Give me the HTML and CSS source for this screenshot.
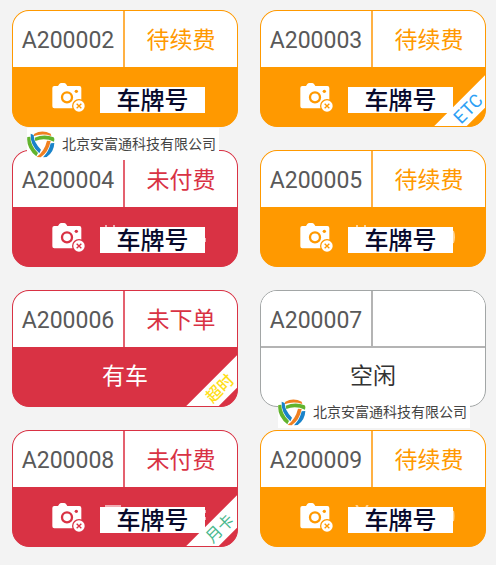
FILE: index.html
```html
<!DOCTYPE html>
<html lang="zh-CN">
<head>
<meta charset="utf-8">
<meta name="viewport" content="width=device-width, initial-scale=1">
<title>A200002 – A200009</title>
<link rel="stylesheet" href="styles.css">
</head>
<body>
<svg class="defs" aria-hidden="true">
  <symbol id="camera" viewBox="0 0 99 87">
    <path fill="currentColor" d="M7 9H18L22 3Q24 0 28 0H36Q40 0 42 3L46 9H82Q88 9 88 15V70Q88 76 82 76H7Q1 76 1 70V15Q1 9 7 9Z"/>
    <circle class="cut-line" cx="45" cy="43" r="15" stroke-width="7"/>
    <circle class="cut" cx="73" cy="25" r="5"/>
    <circle class="cut" cx="81" cy="69" r="21"/>
    <circle fill="currentColor" cx="81" cy="69" r="17"/>
    <path class="cut-line" stroke-width="4" d="M74 62L88 76M88 62L74 76"/>
  </symbol>
  <symbol id="logo" viewBox="0 0 84 81">
    <path fill="#f08020" d="M22 8Q46-5 71 8L73 15Q46 6 19 16Z"/>
    <path fill="#62b32e" d="M23 20Q52 8 80 19Q84 23 81 32Q52 19 25 30Z"/>
    <path fill="#1a83c9" d="M11 8L20 12Q20 34 42 56L37 67Q8 40 11 8Z"/>
    <path fill="#62b32e" d="M1 18L10 17Q10 43 33 66L28 76Q-3 51 1 18Z"/>
    <path fill="#f08020" d="M60 29L71 30Q65 63 41 79L29 78Q53 59 60 29Z"/>
    <path fill="#1a83c9" d="M82 36Q81 63 59 78L48 79Q66 61 71 37Z"/>
  </symbol>
</svg>
<main>
  <ul class="spaces">
    <li class="card due">
      <div class="face">
        <div class="head"><span class="number">A200002</span><span class="status">待续费</span></div>
        <div class="body vehicle">
          <svg class="camera" aria-hidden="true"><use href="#camera"/></svg>
          <span class="plate">车牌号</span>
        </div>
      </div>
    </li>
    <li class="card due">
      <div class="face">
        <div class="head"><span class="number">A200003</span><span class="status">待续费</span></div>
        <div class="body vehicle">
          <svg class="camera" aria-hidden="true"><use href="#camera"/></svg>
          <span class="plate">车牌号</span>
        </div>
        <span class="ribbon etc">ETC</span>
      </div>
    </li>
    <li class="card unpaid">
      <div class="face">
        <div class="head"><span class="number">A200004</span><span class="status">未付费</span></div>
        <div class="body vehicle">
          <svg class="camera" aria-hidden="true"><use href="#camera"/></svg>
          <span class="plate">车牌号<svg class="trace" viewBox="0 0 109 28" aria-hidden="true"><path d="M8 0V2M16 0V2M107 13V17"/></svg></span>
        </div>
      </div>
      <div class="mark mark-above"><svg class="logo" aria-hidden="true"><use href="#logo"/></svg>北京安富通科技有限公司</div>
    </li>
    <li class="card due">
      <div class="face">
        <div class="head"><span class="number">A200005</span><span class="status">待续费</span></div>
        <div class="body vehicle">
          <svg class="camera" aria-hidden="true"><use href="#camera"/></svg>
          <span class="plate">车牌号<svg class="trace" viewBox="0 0 109 28" aria-hidden="true"><path d="M11 0V2M19 0V2M107 6Q109 12 107 18"/></svg></span>
        </div>
      </div>
    </li>
    <li class="card unpaid">
      <div class="face">
        <div class="head"><span class="number">A200006</span><span class="status">未下单</span></div>
        <div class="body">有车</div>
        <span class="ribbon overtime">超时</span>
      </div>
    </li>
    <li class="card free">
      <div class="face">
        <div class="head"><span class="number">A200007</span><span class="status"></span></div>
        <div class="body">空闲</div>
      </div>
      <div class="mark mark-below"><svg class="logo" aria-hidden="true"><use href="#logo"/></svg>北京安富通科技有限公司</div>
    </li>
    <li class="card unpaid">
      <div class="face">
        <div class="head"><span class="number">A200008</span><span class="status">未付费</span></div>
        <div class="body vehicle">
          <svg class="camera" aria-hidden="true"><use href="#camera"/></svg>
          <span class="plate">车牌号<svg class="trace" viewBox="0 0 109 28" aria-hidden="true"><path d="M7 1H23M107 5V8M107 12V15"/></svg></span>
        </div>
        <span class="ribbon monthly">月卡</span>
      </div>
    </li>
    <li class="card due">
      <div class="face">
        <div class="head"><span class="number">A200009</span><span class="status">待续费</span></div>
        <div class="body vehicle">
          <svg class="camera" aria-hidden="true"><use href="#camera"/></svg>
          <span class="plate">车牌号<svg class="trace" viewBox="0 0 109 28" aria-hidden="true"><path d="M10 0L12 2M22 0L20 2M107 6Q108 11 107 16"/></svg></span>
        </div>
      </div>
    </li>
  </ul>
</main>
</body>
</html>
```
FILE: styles.css
```css
* {
  box-sizing: border-box;
}

body {
  margin: 0;
  background: #f3f3f3;
  font-family: Roboto, "Noto Sans CJK SC", sans-serif;
  font-size: 23px;
  line-height: 32px;
}

.defs {
  display: block;
  width: 0;
  height: 0;
}

.spaces {
  display: grid;
  grid-template-columns: 1fr 1fr;
  gap: 23px 22px;
  margin: 0;
  padding: 10px 10px 18px 12px;
  list-style: none;
}

.card {
  position: relative;
}

.due {
  --tone: #ff9900;
  --edge: #ff9900;
  --line: #ffb144;
}

.unpaid {
  --tone: #d93244;
  --edge: #d93244;
  --line: #e4616f;
}

.free {
  --tone: #ffffff;
  --edge: #a2a6a6;
  --line: #b4b4b4;
}

.face {
  position: relative;
  overflow: hidden;
  border: 1px solid var(--edge);
  border-radius: 17px;
  background: var(--tone);
}

.head {
  display: grid;
  grid-template-columns: 1fr 1fr;
  height: 57px;
  border-bottom: 1px solid var(--tone);
  background: #ffffff;
  text-align: center;
}

.free .head {
  border-bottom: 2px solid var(--line);
}

.number,
.status {
  padding-top: 14px;
}

.number {
  border-right: 2px solid var(--line);
  color: #595959;
}

.status {
  color: var(--tone);
}

.body {
  display: flex;
  align-items: center;
  justify-content: center;
  height: 58px;
  color: #ffffff;
}

.free .body {
  color: #333333;
}

.vehicle {
  justify-content: flex-start;
  gap: 15px;
  padding-left: 39px;
}

.camera {
  width: 33px;
  height: 29px;
}

.cut {
  fill: var(--tone);
}

.cut-line {
  fill: none;
  stroke: var(--tone);
}

.plate {
  position: relative;
  width: 105px;
  height: 26px;
  margin-top: 6px;
  background: #ffffff;
  color: #080a2c;
  font-size: 24px;
  font-weight: 500;
  line-height: 28px;
  text-align: center;
}

.trace {
  position: absolute;
  top: -2px;
  left: -2px;
  width: 109px;
  height: 28px;
  fill: none;
  stroke: #ffffff;
  stroke-width: 2;
  opacity: 0.6;
}

.ribbon {
  position: absolute;
  right: -23px;
  bottom: 6px;
  width: 80px;
  height: 23px;
  background: #ffffff;
  font-size: 16px;
  line-height: 23px;
  text-align: center;
  transform: rotate(-45deg);
}

.etc {
  color: #2c9ff5;
  font-size: 18px;
}

.overtime {
  color: #ffde1a;
  font-weight: 500;
}

.monthly {
  color: #49b98d;
}

.mark {
  position: absolute;
  z-index: 1;
  display: flex;
  align-items: center;
  gap: 7px;
  width: 192px;
  height: 32px;
  background: #ffffff;
  color: #444444;
  font-size: 14px;
  white-space: nowrap;
}

.mark-above {
  top: -22px;
  left: 15px;
}

.mark-below {
  bottom: -21px;
  left: 18px;
}

.logo {
  flex: none;
  width: 28px;
  height: 27px;
}
```
